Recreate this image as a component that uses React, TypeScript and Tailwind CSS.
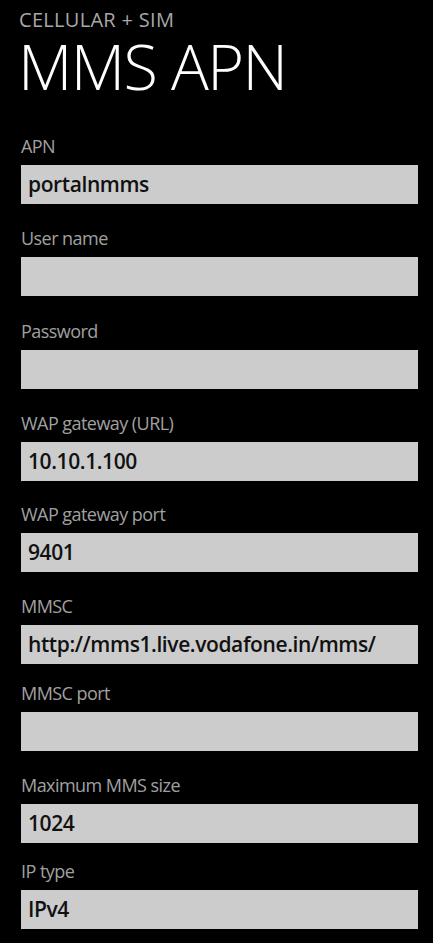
import React from "react";

type Field = { label: string; value: string; gap: string };

const fields: Field[] = [
  { label: "APN", value: "portalnmms", gap: "mt-[37px]" },
  { label: "User name", value: "", gap: "mt-[22px]" },
  { label: "Password", value: "", gap: "mt-[23px]" },
  { label: "WAP gateway (URL)", value: "10.10.1.100", gap: "mt-[22px]" },
  { label: "WAP gateway port", value: "9401", gap: "mt-[21px]" },
  { label: "MMSC", value: "http://mms1.live.vodafone.in/mms/", gap: "mt-[22px]" },
  { label: "MMSC port", value: "", gap: "mt-[17px]" },
  { label: "Maximum MMS size", value: "1024", gap: "mt-[22px]" },
  { label: "IP type", value: "IPv4", gap: "mt-[16px]" },
];

export default function App() {
  return (
    <div
      className="w-[433px] h-[943px] overflow-hidden bg-black text-white"
      style={{ fontFamily: '"Open Sans", "Noto Sans", sans-serif' }}
    >
      <div className="px-[21px] pt-[10px]">
        <div className="text-[20px] leading-[20px] text-[#a8a8a8] -ml-[2px] tracking-[0.3px]">CELLULAR + SIM</div>
        <div className="mt-[4px] -ml-[3px] text-[63px] leading-[63px] font-light tracking-[-1.6px]">MMS APN</div>
        {fields.map((f) => (
          <div key={f.label} className={f.gap}>
            <div className="text-[18px] leading-[24px] text-[#a0a0a0] mb-[7px] tracking-[-0.55px]">{f.label}</div>
            <div className="h-[39px] w-[397px] bg-[#cccccc] px-[7px] text-[21px] leading-[39px] font-semibold text-[#111111] whitespace-nowrap overflow-hidden tracking-[-0.4px]">
              {f.value}
            </div>
          </div>
        ))}
      </div>
    </div>
  );
}
